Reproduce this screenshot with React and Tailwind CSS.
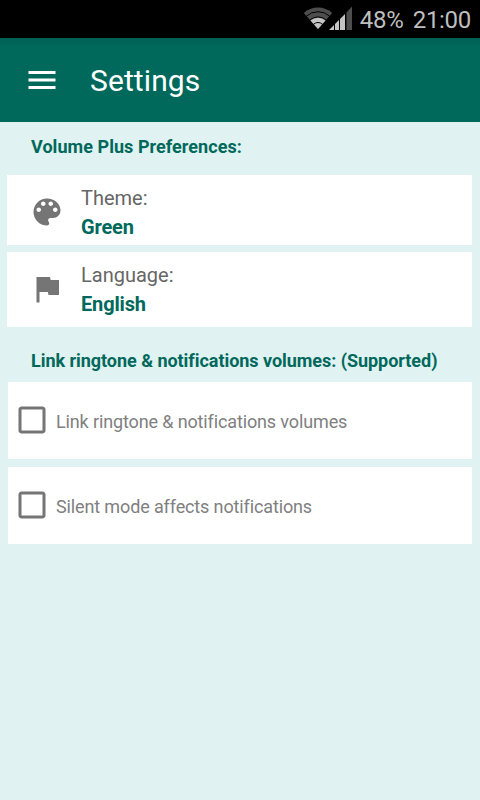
import React, { useState } from 'react';

const MenuIcon = () => (
  <svg viewBox="0 0 24 24" className="h-9 w-9 fill-white">
    <path d="M3 18h18v-2H3v2zm0-5h18v-2H3v2zm0-7v2h18V6H3z" />
  </svg>
);

const PaletteIcon = () => (
  <svg viewBox="0 0 24 24" className="-mt-0.5 h-9 w-9 fill-[#757575]">
    <path d="M12 3c-4.97 0-9 4.03-9 9s4.03 9 9 9c.83 0 1.5-.67 1.5-1.5 0-.39-.15-.74-.39-1.01-.23-.26-.38-.61-.38-.99 0-.83.67-1.5 1.5-1.5H16c2.76 0 5-2.24 5-5 0-4.42-4.03-8-9-8zm-5.5 9c-.83 0-1.5-.67-1.5-1.5S5.67 9 6.5 9 8 9.67 8 10.5 7.33 12 6.5 12zm3-4C8.67 8 8 7.33 8 6.5S8.67 5 9.5 5s1.5.67 1.5 1.5S10.33 8 9.5 8zm5 0c-.83 0-1.5-.67-1.5-1.5S13.67 5 14.5 5s1.5.67 1.5 1.5S15.33 8 14.5 8zm3 4c-.83 0-1.5-.67-1.5-1.5S16.67 9 17.5 9s1.5.67 1.5 1.5-.67 1.5-1.5 1.5z" />
  </svg>
);

const FlagIcon = () => (
  <svg viewBox="0 0 24 24" className="mb-0.5 h-9 w-9 fill-[#757575]">
    <path d="M14.4 6L14 4H5v17h2v-7h5.6l.4 2h7V6z" />
  </svg>
);

// each band is a slice of the same fan, widest at the top
const WifiIcon = () => (
  <svg viewBox="0 0 30 24" className="h-6 w-[30px]">
    <path d="M15 23L.8 7a21 21 0 0 1 28.4 0z" fill="#4d4d4d" />
    <path d="M3.3 10.2a17.5 17.5 0 0 1 23.4 0M6.8 14a12.5 12.5 0 0 1 16.4 0" stroke="#000" strokeWidth="1" fill="none" />
    <path d="M15 23L7.5 14.6a11.5 11.5 0 0 1 15 0z" fill="#c4c4c4" />
    <path d="M10.3 18.4a7.4 7.4 0 0 1 9.4 0" stroke="#000" strokeWidth="1" fill="none" />
  </svg>
);

const SignalIcon = () => (
  <svg viewBox="0 0 24 24" className="-ml-1 h-6 w-6">
    <path d="M0 24L5 19v5zM6 18l4-4v10H6zM11 13l5-5v16h-5z" fill="#c4c4c4" />
    <path d="M17.5 6.5L23 .5V24h-5.500z" fill="#4d4d4d" />
  </svg>
);

const PreferenceRow = ({ icon, label, value, className }) => (
  <div className={`flex items-center bg-white pl-[22px] ${className}`}>
    {icon}
    <div className="ml-4 text-[20px] leading-[29px]">
      <p className="text-[#666666]">{label}</p>
      <p className="font-bold tracking-[-0.15px] text-[#00695c]">{value}</p>
    </div>
  </div>
);

const CheckRow = ({ label }) => {
  const [checked, setChecked] = useState(false);

  return (
    <button
      type="button"
      onClick={() => setChecked(!checked)}
      className="flex h-[77px] w-full items-center bg-white pb-0.5 pl-1.5 text-left"
    >
      <svg viewBox="0 0 24 24" className="h-9 w-9 fill-[#757575]">
        {checked ? (
          <path d="M19 3H5c-1.11 0-2 .9-2 2v14c0 1.1.89 2 2 2h14c1.11 0 2-.9 2-2V5c0-1.1-.89-2-2-2zm-9 14l-5-5 1.41-1.41L10 14.17l7.59-7.59L19 8l-9 9z" />
        ) : (
          <path d="M19 5v14H5V5h14m0-2H5c-1.1 0-2 .9-2 2v14c0 1.1.9 2 2 2h14c1.1 0 2-.9 2-2V5c0-1.1-.9-2-2-2z" />
        )}
      </svg>
      <span className="ml-1.5 pt-1 text-[18px] leading-6 tracking-[-0.13px] text-[#808080]">{label}</span>
    </button>
  );
};

const App = () => {
  return (
    <div className="min-h-screen w-full bg-[#e0f2f1] font-['Roboto',sans-serif]">
      <div className="flex h-[38px] items-center justify-end bg-black pr-[9px] text-[24px] leading-none text-[#bebebe]">
        <div className="flex pb-0.5">
          <WifiIcon />
          <SignalIcon />
        </div>
        <span className="ml-[7px] pt-0.5 tracking-[-0.2px]">48%</span>
        <span className="ml-[9px] pt-0.5 tracking-[-0.3px]">21:00</span>
      </div>

      <header className="flex h-[84px] items-center bg-[#00695c] bg-linear-to-b from-[#005f53] to-[#00695c] to-10% pl-6">
        <MenuIcon />
        <h1 className="ml-[30px] text-[30px] tracking-[0.1px] text-white">Settings</h1>
      </header>

      <main>
        <h2 className="flex h-[53px] items-center pb-[5px] pl-[31px] text-[18px] font-bold tracking-[0.05px] text-[#00695c]">
          Volume Plus Preferences:
        </h2>
        <div className="space-y-[7px] pr-2 pl-[7px]">
          <PreferenceRow icon={<PaletteIcon />} label="Theme:" value="Green" className="h-[70px] pt-1.5" />
          <PreferenceRow icon={<FlagIcon />} label="Language:" value="English" className="h-[75px]" />
        </div>

        <h2 className="flex h-[55px] items-center pt-3 pl-[31px] text-[18px] font-bold tracking-[-0.04px] text-[#00695c]">
          Link ringtone &amp; notifications volumes: (Supported)
        </h2>
        <div className="space-y-2 px-2">
          <CheckRow label="Link ringtone & notifications volumes" />
          <CheckRow label="Silent mode affects notifications" />
        </div>
      </main>
    </div>
  );
};

export default App;
